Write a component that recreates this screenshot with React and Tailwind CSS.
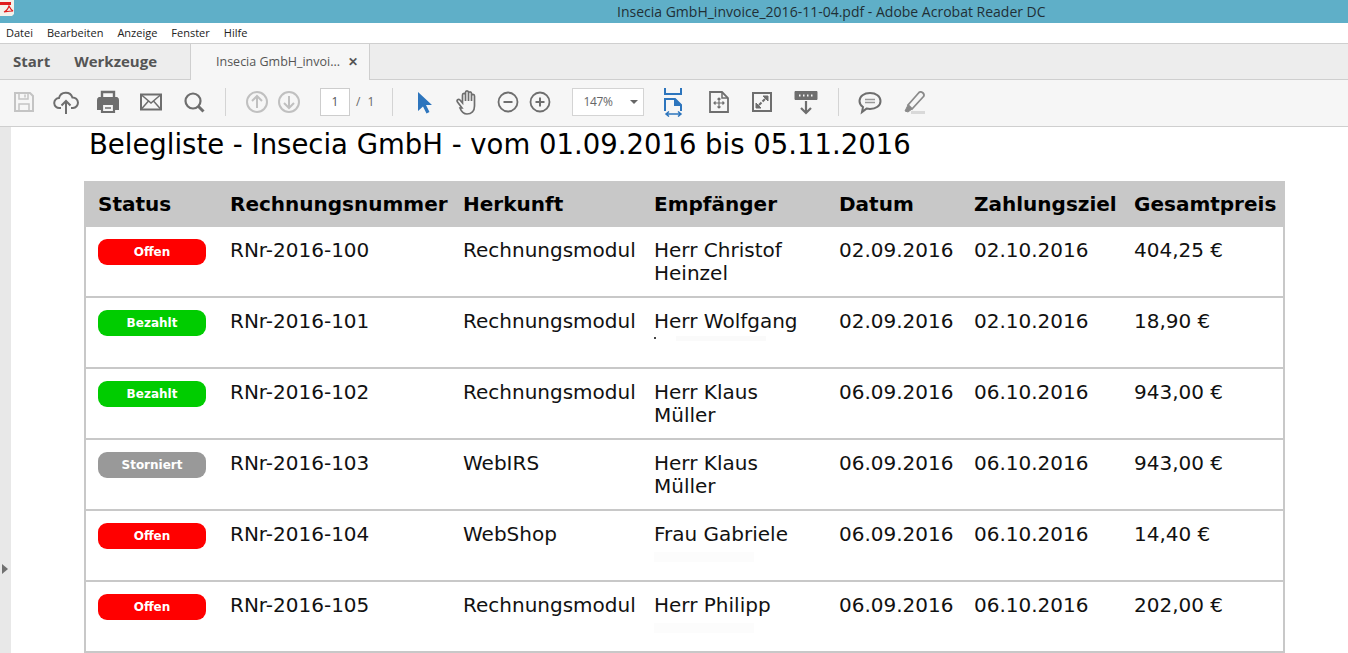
const rows = [
  { s: "Offen", n: "RNr-2016-100", h: "Rechnungsmodul", e: ["Herr Christof", "Heinzel"], d: "02.09.2016", z: "02.10.2016", p: "404,25 €" },
  { s: "Bezahlt", n: "RNr-2016-101", h: "Rechnungsmodul", e: ["Herr Wolfgang"], d: "02.09.2016", z: "02.10.2016", p: "18,90 €", mark: "w" },
  { s: "Bezahlt", n: "RNr-2016-102", h: "Rechnungsmodul", e: ["Herr Klaus", "Müller"], d: "06.09.2016", z: "06.10.2016", p: "943,00 €" },
  { s: "Storniert", n: "RNr-2016-103", h: "WebIRS", e: ["Herr Klaus", "Müller"], d: "06.09.2016", z: "06.10.2016", p: "943,00 €" },
  { s: "Offen", n: "RNr-2016-104", h: "WebShop", e: ["Frau Gabriele"], d: "06.09.2016", z: "06.10.2016", p: "14,40 €", mark: "f" },
  { s: "Offen", n: "RNr-2016-105", h: "Rechnungsmodul", e: ["Herr Philipp"], d: "06.09.2016", z: "06.10.2016", p: "202,00 €", mark: "f" },
];

const pill = { Offen: "bg-[#ff0000]", Bezahlt: "bg-[#00cc00]", Storniert: "bg-[#999999]" };

const Ic = ({ w = 26, h = 26, children, className = "" }) => (
  <svg width={w} height={h} viewBox={`0 0 ${w} ${h}`} fill="none" stroke="#6e6e6e" strokeWidth="2" className={`shrink-0 ${className}`}>
    {children}
  </svg>
);

const Sep = ({ className }) => <div className={`h-[28px] w-px bg-[#d4d4d4] shrink-0 ${className}`} />;

function Toolbar() {
  return (
    <div className="flex h-[47px] shrink-0 items-center border-b border-[#cfcfcf] bg-[#f6f6f6] pb-[2px] pl-[11px]">
      {/* save */}
      <Ic>
        <path d="M4 4h15l3 3v15H4z" stroke="#c4c4c4" />
        <path d="M8 4v6h9V4M8 22v-7h10v7M14 5.5v3" stroke="#c4c4c4" strokeWidth="1.5" />
      </Ic>
      {/* cloud upload */}
      <Ic className="ml-[16px]">
        <path d="M8 19H6.5a5 5 0 0 1-.5-10 7 7 0 0 1 13.4-.5A5.2 5.2 0 0 1 20 19h-2" />
        <path d="M13 25V12M8.5 16.5 13 12l4.500 4.500" />
      </Ic>
      {/* print */}
      <Ic className="ml-[16px]">
        <path d="M7 9V3h12v6" strokeWidth="2.4" />
        <path d="M4 9h18a2 2 0 0 1 1 2v9h-4v-3H7v3H3v-9a2 2 0 0 1 1-2z" fill="#6e6e6e" stroke="#6e6e6e" />
        <path d="M7 15h12v8H7z" fill="#f6f6f6" strokeWidth="2.2" />
        <path d="M10 19h6" strokeWidth="1.500" />
      </Ic>
      {/* mail */}
      <Ic className="ml-[17px]">
        <path d="M3 5.500h20v15H3z" />
        <path d="M3 5.500 13 14l10-8.500M3 20.500l7.500-8.500M23 20.500 15.500 12" strokeWidth="1.500" />
      </Ic>
      {/* search */}
      <Ic className="ml-[17px]">
        <circle cx="12" cy="12" r="7.500" strokeWidth="2.200" />
        <path d="m17.500 17.500 5 5" strokeWidth="3" />
      </Ic>
      <Sep className="ml-[18px]" />
      {/* prev/next */}
      <Ic className="ml-[18px]">
        <circle cx="13" cy="13" r="10" stroke="#c0c0c0" />
        <path d="M13 19V7.500M8 12l5-5 5 5" stroke="#c0c0c0" />
      </Ic>
      <Ic className="ml-[6px]">
        <circle cx="13" cy="13" r="10" stroke="#c0c0c0" />
        <path d="M13 7v11.500M8 14l5 5 5-5" stroke="#c0c0c0" />
      </Ic>
      <div className="ml-[18px] flex h-[28px] w-[30px] shrink-0 items-center justify-center border border-[#cdcdcd] bg-white font-['Open_Sans',sans-serif] text-[12px] text-[#555]">1</div>
      <span className="ml-[6px] font-['Open_Sans',sans-serif] text-[12px] tracking-[2px] whitespace-pre text-[#666]">/ 1</span>
      <Sep className="ml-[16px]" />
      {/* arrow */}
      <Ic className="ml-[18px]">
        <path d="M7 3 21 16h-6l3.500 7-3 1.500-3.500-7L7 22z" fill="#2d75bd" stroke="none" />
      </Ic>
      {/* hand */}
      <Ic className="ml-[17px]" w={28} h={28}>
        <path
          d="M8 20 3.500 14c-1.500-2 1-3.500 2.500-2l2.500 3V7c0-2.200 3-2.200 3 0v6-8.500c0-2.200 3-2.200 3 0V13 5.500c0-2.200 3-2.200 3 0V13 8c0-2.200 3-2.200 3 0v10c0 5-3 8-7.500 8-3.500 0-5.500-2-7-6z"
          strokeWidth="1.700"
        />
      </Ic>
      {/* zoom out / in */}
      <Ic className="ml-[15px]" w={22} h={22}>
        <circle cx="11" cy="11" r="9.500" strokeWidth="1.800" />
        <path d="M6.500 11h9" />
      </Ic>
      <Ic className="ml-[10px]" w={22} h={22}>
        <circle cx="11" cy="11" r="9.500" strokeWidth="1.800" />
        <path d="M6.500 11h9M11 6.500v9" />
      </Ic>
      <div className="ml-[21px] flex h-[28px] w-[72px] shrink-0 items-center border border-[#d4d4d4] bg-white pl-[10px] font-['Open_Sans',sans-serif] text-[12px] tracking-[-0.3px] text-[#666]">
        147%
        <span className="ml-[17px] h-0 w-0 border-x-[4px] border-t-[4px] border-x-transparent border-t-[#666]" />
      </div>
      {/* fit width */}
      <Ic className="ml-[18px]" w={24} h={30}>
        <path d="M3 1v6h16V1" stroke="#2d75bd" />
        <path d="M3 24V12h10l6 6v6" stroke="#2d75bd" />
        <path d="M13 12v6h6" fill="#2d75bd" stroke="#2d75bd" />
        <path d="M4 27h15M7 24.500 4 27l3 2.500M16 24.500l3 2.500-3 2.500" stroke="#2d75bd" strokeWidth="1.500" />
      </Ic>
      {/* fit page */}
      <Ic className="ml-[21px]" w={24} h={26}>
        <path d="M3 3h12l6 6v14H3z" strokeWidth="1.800" />
        <path d="M15 3v6h6" strokeWidth="1.500" />
        <path d="M12 9v10M7 14h10M10.500 10.500 12 9l1.500 1.500M10.500 17.500 12 19l1.500-1.500M8.500 12.500 7 14l1.500 1.500M15.500 12.500 17 14l-1.500 1.500" strokeWidth="1.200" />
      </Ic>
      {/* fullscreen */}
      <Ic className="ml-[19px]" w={24} h={26}>
        <path d="M3 4h18v18H3z" strokeWidth="2" />
        <path d="M13 7h5v5zM11 19H6v-5z" fill="#6e6e6e" stroke="#6e6e6e" strokeWidth="1" />
        <path d="m15 10-2.500 2.500M9 16l2.500-2.500" />
      </Ic>
      {/* read mode */}
      <Ic className="ml-[19px]" w={26} h={26}>
        <path d="M2 2.500h22v8H2z" fill="#6e6e6e" stroke="#6e6e6e" strokeWidth="1" />
        <path d="M6 6.500h1.500M10 6.500h1.500M14 6.500h1.500M18 6.500h1.500" stroke="#f6f6f6" strokeWidth="2" />
        <path d="M13 12v12M8 19l5 5 5-5" strokeWidth="2.200" />
      </Ic>
      <Sep className="ml-[19px]" />
      {/* comment */}
      <Ic className="ml-[18px]">
        <path d="M13 4c6 0 10.500 3.200 10.500 8s-4.500 8-10.500 8c-1.200 0-2.500-.2-3.500-.4L5 23l1-5C3.800 16.500 2.500 14.500 2.500 12 2.500 7.200 7 4 13 4z" />
        <path d="M8 10.500h10M8 13.500h10" strokeWidth="1.400" stroke="#999" />
      </Ic>
      {/* highlighter */}
      <Ic className="ml-[18px]">
        <path d="M7 16 18 3.500c1-1 3-.5 4 .5s1.500 2.500.5 3.500L11 20z" strokeWidth="1.800" stroke="#8a8a8a" />
        <path d="M7 16l-3 6 3 1 4-3z" fill="#8a8a8a" stroke="#8a8a8a" strokeWidth="1" />
        <path d="M10 23.500h14" stroke="#d9d9d9" strokeWidth="3" />
      </Ic>
    </div>
  );
}

function Cell({ w, children }) {
  return <div className={`${w} shrink-0`}>{children}</div>;
}

export default function App() {
  return (
    <div className="flex h-[653px] w-[1348px] flex-col overflow-hidden bg-white font-['Open_Sans',sans-serif]">
      {/* title bar */}
      <div className="flex h-[23px] shrink-0 items-center bg-[#5fafc8]">
        <svg width="18" height="18" viewBox="0 0 18 18" className="mb-[5px] shrink-0">
          <path d="M0 0h14v14l-2 2H0z" fill="#f4f1ea" />
          <path d="M0 2h11v3H0z" fill="#e01c1c" />
          <path d="M9 6c-1 3-2.500 5-5 6 3-.5 6-1 9-1-2-1-3-3-4-5z" fill="none" stroke="#e01c1c" strokeWidth="1.200" />
        </svg>
        <div className="ml-[599px] whitespace-nowrap text-[14px] text-[#1f2f36]">
          Insecia GmbH_invoice_2016-11-04.pdf - Adobe Acrobat Reader DC
        </div>
      </div>

      {/* menu */}
      <div className="flex h-[20px] shrink-0 items-center gap-[14px] bg-white pl-[6px] text-[11px] text-[#222]">
        <span>Datei</span>
        <span>Bearbeiten</span>
        <span>Anzeige</span>
        <span>Fenster</span>
        <span>Hilfe</span>
      </div>

      {/* tabs */}
      <div className="flex h-[37px] shrink-0 border-t border-b border-[#cfcfcf] bg-[#ededed]">
        <div className="flex w-[190px] items-center gap-[24px] pl-[13px] text-[15px] font-bold text-[#555]">
          <span>Start</span>
          <span>Werkzeuge</span>
        </div>
        <div className="flex h-[36px] w-[180px] items-center border-x border-[#cfcfcf] bg-[#f6f6f6] pl-[25px] text-[12.500px] text-[#555]">
          <span>Insecia GmbH_invoi...</span>
          <span className="ml-[8px] text-[12px] font-bold text-[#555]">✕</span>
        </div>
      </div>

      <Toolbar />

      {/* document area */}
      <div className="flex min-h-0 flex-1">
        <div className="flex w-[11px] shrink-0 flex-col justify-end bg-[#e8e8e8] pb-[79px] pl-[2px]">
          <span className="h-0 w-0 border-y-[5px] border-l-[6px] border-y-transparent border-l-[#707070]" />
        </div>
        <div className="min-w-0 flex-1 pl-[73px] font-['DejaVu_Sans',sans-serif] text-black">
          <h1 className="h-[54px] pl-[5px] text-[27.500px] leading-[35px] font-normal">
            Belegliste - Insecia GmbH - vom 01.09.2016 bis 05.11.2016
          </h1>
          <div className="w-[1201px] border-x-2 border-[#c8c8c8]">
            <div className="flex h-[46px] items-center bg-[#c8c8c8] pl-[12px] text-[20px] font-bold">
              <Cell w="w-[132px]">Status</Cell>
              <Cell w="w-[233px]">Rechnungsnummer</Cell>
              <Cell w="w-[191px]">Herkunft</Cell>
              <Cell w="w-[185px]">Empfänger</Cell>
              <Cell w="w-[135px]">Datum</Cell>
              <Cell w="w-[160px]">Zahlungsziel</Cell>
              <Cell w="w-[140px]">Gesamtpreis</Cell>
            </div>
            {rows.map((r) => (
              <div key={r.n} className="flex h-[71px] border-b-2 border-[#c8c8c8] pt-[12px] pl-[12px] text-[20px] leading-[23px] text-[#111]">
                <Cell w="w-[132px]">
                  <div className={`flex h-[26px] w-[108px] items-center justify-center rounded-[9px] text-[12px] leading-none font-semibold text-white ${pill[r.s]}`}>
                    {r.s}
                  </div>
                </Cell>
                <Cell w="w-[233px]">{r.n}</Cell>
                <Cell w="w-[191px]">{r.h}</Cell>
                <Cell w="w-[185px]">
                  {r.e.map((l) => (
                    <div key={l}>{l}</div>
                  ))}
                  {r.mark === "w" && (
                    <div className="mt-[2px] flex items-start gap-[20px] pt-[1px]">
                      <span className="mt-[1px] h-[2px] w-[2px] bg-[#444]" />
                      <span className="h-[5px] w-[90px] bg-[#fafafa]" />
                    </div>
                  )}
                  {r.mark === "f" && <div className="mt-[6px] h-[10px] w-[100px] bg-[#fcfcfc]" />}
                </Cell>
                <Cell w="w-[135px]">{r.d}</Cell>
                <Cell w="w-[160px]">{r.z}</Cell>
                <Cell w="w-[140px]">{r.p}</Cell>
              </div>
            ))}
          </div>
        </div>
      </div>
    </div>
  );
}
